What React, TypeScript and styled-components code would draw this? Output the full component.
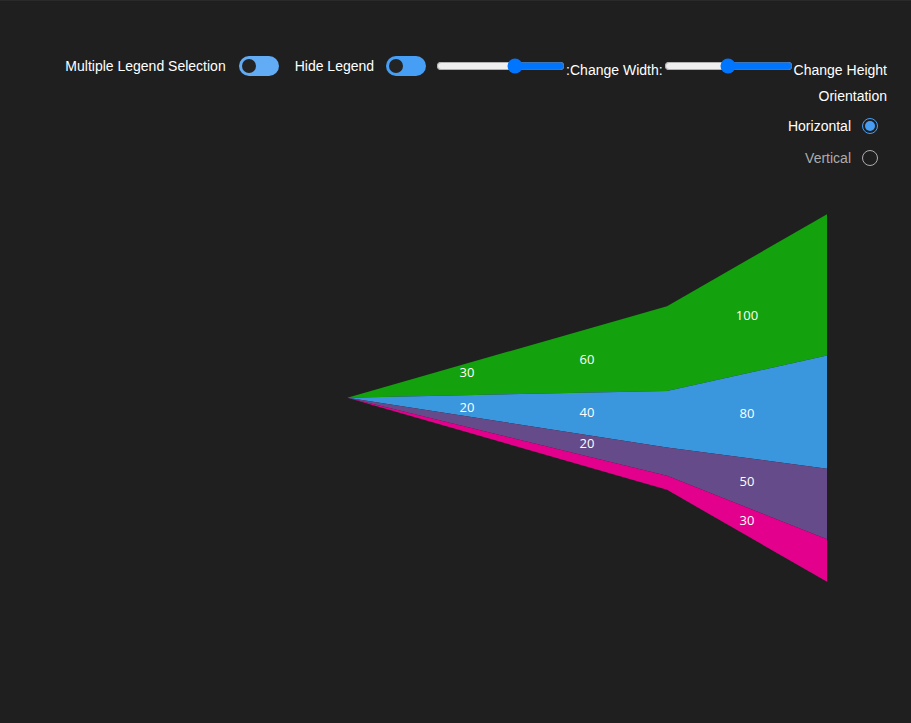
import React from "react";
import styled, { createGlobalStyle } from "styled-components";

const Global = createGlobalStyle`
  html, body { margin: 0; padding: 0; background: #1f1f1f; }
  body { font-family: "Liberation Sans", Arial, sans-serif; color: #ffffff; }
  #root { min-height: 723px; }
`;

const Page = styled.div`
  width: 911px;
  height: 723px;
  background: #1f1f1f;
  border-top: 1px solid #2a2a2a;
  box-sizing: border-box;
  display: flex;
  flex-direction: column;
  overflow: hidden;
`;

const Controls = styled.div`
  height: 179px;
  box-sizing: border-box;
  padding: 55px 24px 0 0;
  display: flex;
  flex-direction: column;
  align-items: flex-end;
`;

const Row = styled.div`
  display: flex;
  align-items: center;
  height: 20px;
`;

const Label = styled.span<{ $gap: number; $drop?: number }>`
  font-size: 14px;
  line-height: 20px;
  white-space: nowrap;
  color: #ffffff;
  margin-right: ${(p) => p.$gap}px;
  margin-top: ${(p) => (p.$drop ?? 0) * 2}px;
`;

const Toggle = styled.span<{ $color: string; $gap: number }>`
  position: relative;
  display: inline-block;
  width: 40px;
  height: 20px;
  border-radius: 10px;
  background: ${(p) => p.$color};
  margin-right: ${(p) => p.$gap}px;
  flex-shrink: 0;
`;

const Thumb = styled.span`
  position: absolute;
  left: 3px;
  top: 3px;
  width: 14px;
  height: 14px;
  border-radius: 50%;
  background: #242424;
`;

const Range = styled.input`
  width: 129px;
  height: 16px;
  margin: 2px 1px;
  flex-shrink: 0;
`;

const GroupTitle = styled.div`
  font-size: 14px;
  line-height: 20px;
  margin-top: 10px;
  margin-bottom: 4px;
  color: #ffffff;
`;

const Option = styled.div<{ $active: boolean }>`
  display: flex;
  align-items: center;
  height: 32px;
  gap: 11px;
  padding-right: 9px;
  font-size: 14px;
  color: ${(p) => (p.$active ? "#ffffff" : "#adadad")};
`;

const RadioCircle = styled.span<{ $active: boolean }>`
  position: relative;
  width: 16px;
  height: 16px;
  box-sizing: border-box;
  border-radius: 50%;
  border: 1px solid ${(p) => (p.$active ? "#479ef5" : "#adadad")};
  &::after {
    content: "";
    display: ${(p) => (p.$active ? "block" : "none")};
    position: absolute;
    left: 2px;
    top: 2px;
    width: 10px;
    height: 10px;
    border-radius: 50%;
    background: #479ef5;
  }
`;

const ChartArea = styled.div`
  flex: 1;
  display: flex;
`;

const ChartSvg = styled.svg`
  display: block;
  width: 911px;
  height: 543px;
`;

const ValueText = styled.text`
  font-family: "Open Sans", "Liberation Sans", Arial, sans-serif;
  font-size: 13px;
  fill: #ffffff;
`;

const colors = ["#13a10e", "#3a96dd", "#654b8a", "#e3008c"];
const stageRight = [100, 80, 50, 30];
const stageMid = [60, 40, 20, 10];
const scale = 1.4131;
const cy = 398;
const xR = 827;
const xM = 667;
const apex = { x: 347.3, y: 397.7 };

function edges(values: number[]) {
  const total = values.reduce((a, b) => a + b, 0);
  const ys = [cy - (total * scale) / 2];
  values.forEach((v) => ys.push(ys[ys.length - 1] + v * scale));
  return ys;
}

const labels = [
  { x: 467, y: 372, t: "30" },
  { x: 467, y: 407, t: "20" },
  { x: 587, y: 359, t: "60" },
  { x: 587, y: 412, t: "40" },
  { x: 587, y: 443, t: "20" },
  { x: 747, y: 315, t: "100" },
  { x: 747, y: 413, t: "80" },
  { x: 747, y: 481, t: "50" },
  { x: 747, y: 520, t: "30" },
];

function Funnel() {
  const r = edges(stageRight);
  const m = edges(stageMid);
  return (
    <ChartSvg viewBox="0 180 911 543">
      {colors.map((c, i) => (
        <polygon
          key={"a" + i}
          fill={c}
          points={`${xR},${r[i]} ${xR},${r[i + 1]} ${xM},${m[i + 1]} ${xM},${m[i]}`}
        />
      ))}
      {colors.map((c, i) => (
        <polygon
          key={"b" + i}
          fill={c}
          points={`${xM},${m[i]} ${xM},${m[i + 1]} ${apex.x},${apex.y}`}
        />
      ))}
      {labels.map((l, i) => (
        <ValueText key={i} x={l.x} y={l.y} textAnchor="middle" dominantBaseline="central">
          {l.t}
        </ValueText>
      ))}
    </ChartSvg>
  );
}

export default function App() {
  return (
    <>
      <Global />
      <Page>
        <Controls>
          <Row>
            <Label $gap={13}>Multiple Legend Selection</Label>
            <Toggle $color="#62abf5" $gap={16}>
              <Thumb />
            </Toggle>
            <Label $gap={12}>Hide Legend</Label>
            <Toggle $color="#479ef5" $gap={9}>
              <Thumb />
            </Toggle>
            <Range type="range" dir="rtl" min={0} max={100} defaultValue={37.5} step={0.5} />
            <Label $gap={0} $drop={4}>:Change Width:</Label>
            <Range type="range" dir="rtl" min={0} max={100} defaultValue={50} />
            <Label $gap={0} $drop={4}>Change Height</Label>
          </Row>
          <GroupTitle>Orientation</GroupTitle>
          <Option $active>
            Horizontal
            <RadioCircle $active />
          </Option>
          <Option $active={false}>
            Vertical
            <RadioCircle $active={false} />
          </Option>
        </Controls>
        <ChartArea>
          <Funnel />
        </ChartArea>
      </Page>
    </>
  );
}
